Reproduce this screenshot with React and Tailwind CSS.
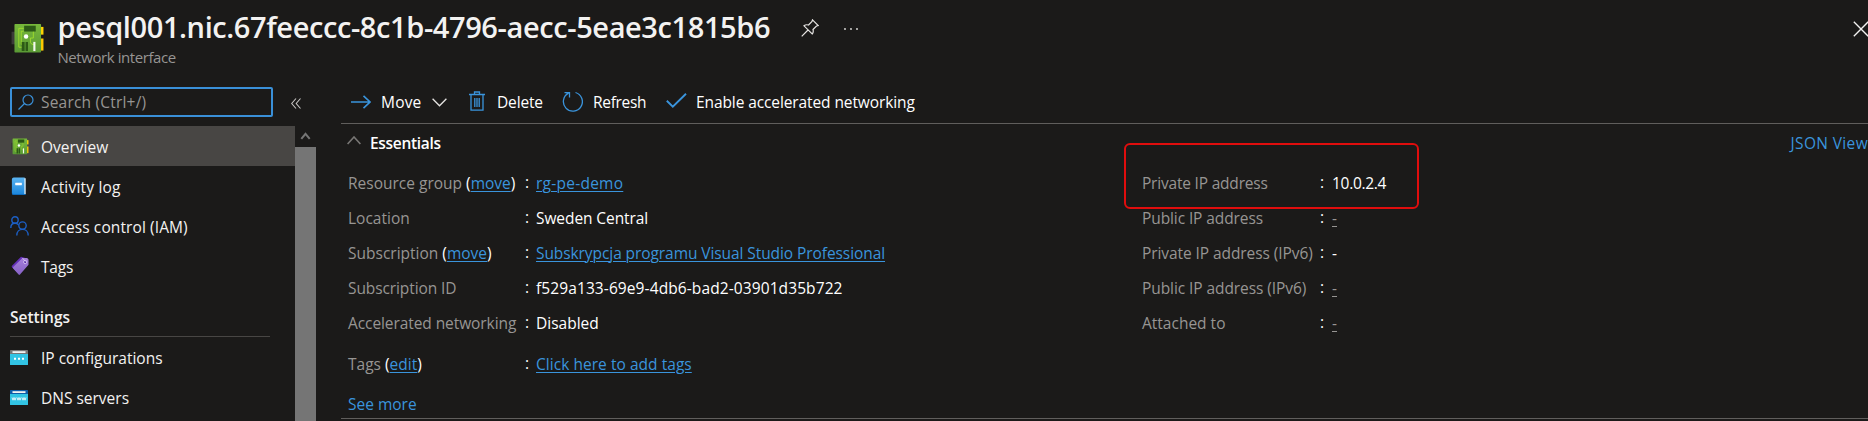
const Nic = ({ className }) => (
  <svg viewBox="0 0 34 30" className={className}>
    <rect x="0" y="8" width="5" height="13" fill="#3b3a39" />
    <rect x="28" y="3" width="5" height="8" fill="#ffd400" />
    <rect x="28" y="15" width="5" height="12.500" fill="#ffca00" />
    <defs>
      <linearGradient id="board" x1="0" y1="0" x2="0" y2="1">
        <stop offset="0" stopColor="#77b83a" />
        <stop offset="1" stopColor="#5a9a35" />
      </linearGradient>
    </defs>
    <rect x="3" y="0" width="27.500" height="29.500" rx="0.800" fill="url(#board)" />
    <rect x="13" y="1.800" width="12" height="6" fill="#2c5a16" />
    <path d="M12.500 4.500H7.500V24h4M12.500 7.500H10V21h2M22.500 8v6.500h-3v4.500l1.500 2h3" fill="none" stroke="#a4e02c" strokeWidth="0.900" />
    <circle cx="15" cy="13" r="2.300" fill="#fff" />
    <path d="M10.500 18.500h3v9.500h-3zM14.500 18.500h2.500v9.500h-2.500z" fill="#2c5a16" />
    <rect x="22.500" y="18.500" width="2.200" height="9.500" fill="#f4f9ee" />
  </svg>
);

const Log = () => (
  <svg viewBox="0 0 18 20" className="h-[19px] w-[18px]">
    <defs>
      <linearGradient id="log" x1="0" y1="0" x2="0" y2="1">
        <stop offset="0" stopColor="#5ab4f2" />
        <stop offset="1" stopColor="#1b86dc" />
      </linearGradient>
    </defs>
    <path d="M3 1.500h12.500V18H3z" fill="#e8f4fc" />
    <path d="M3.500.5h11.500V18.500H3A1.500 1.500 0 0 1 1.500 17V2.500A2 2 0 0 1 3.500.5z" fill="url(#log)" />
    <path d="M1.500 17q0 2 2 2h12.500v-1.200H3z" fill="#0f6cbd" />
    <path d="M14.800 1.200H16V18h-1.200z" fill="#d8ecfa" />
    <rect x="5" y="6" width="7" height="2.600" rx="0.400" fill="#fff" />
  </svg>
);

const People = () => (
  <svg viewBox="0 0 20 20" className="-mt-px h-5 w-5" fill="none" stroke="#1c5fc4" strokeWidth="1.400">
    <circle cx="5" cy="4" r="3.200" />
    <path d="M.8 12C.8 8.800 2.600 7.300 5 7.300c1.400 0 2.600.5 3.500 1.400" />
    <circle cx="12.500" cy="9.600" r="3.700" />
    <path d="M6.800 19.500c0-3.800 2.500-6.100 5.700-6.100s5.700 2.300 5.700 6.100" />
  </svg>
);

const Tag = () => (
  <svg viewBox="0 0 20 20" className="-mt-px h-5 w-5">
    <defs>
      <linearGradient id="tag" x1="0" y1="0" x2="0" y2="1">
        <stop offset="0" stopColor="#a67fdb" />
        <stop offset="1" stopColor="#8661c5" />
      </linearGradient>
    </defs>
    <path d="M11 .8 2 9.800a1 1 0 0 0 0 1.400l6 6L17 6V2.500z" fill="#6330b8" />
    <path d="M12.500 2h4.700l1.300 1.500v5.200L10 18.600a1 1 0 0 1-1.400 0L3.200 12.500a1 1 0 0 1 0-1.400z" fill="url(#tag)" />
    <circle cx="15.200" cy="6" r="1.600" fill="#5b2bab" stroke="#e6dbf7" strokeWidth="0.800" />
    <path d="M12.500 2.200 15.600 5.500" stroke="#d9c9f2" strokeWidth="0.800" />
  </svg>
);

const IpConfig = () => (
  <svg viewBox="0 0 18 15" className="h-[15px] w-[18px]">
    <rect width="18" height="5" rx="0.600" fill="#767676" />
    <rect x="2.500" y="1.200" width="13" height="1.800" fill="#f2f2f2" />
    <path d="M0 4h18v10.400q0 .6-.6.6H.6q-.6 0-.6-.6z" fill="#32c4e4" />
    <path d="M4 8.800h2M8 8.800h2M12 8.800h2" stroke="#fff" strokeWidth="2" />
  </svg>
);

const Dns = () => (
  <svg viewBox="0 0 18 15" className="h-[15px] w-[18px]">
    <rect width="18" height="5" rx="0.600" fill="#0e5ca8" />
    <rect x="2.500" y="1.200" width="13" height="1.800" fill="#f2f2f2" />
    <path d="M0 4h18v10.400q0 .6-.6.6H.6q-.6 0-.6-.6z" fill="#32c4e4" />
    <path d="m2 7.500 1 2.700 1-2.700 1 2.700 1-2.700m1 0 1 2.700 1-2.700 1 2.700 1-2.700m1 0 1 2.700 1-2.700 1 2.700 1-2.700" fill="none" stroke="#fff" strokeWidth="0.800" />
  </svg>
);

const NavItem = ({ icon, label, track = '', active }) => (
  <div className={`flex h-10 shrink-0 items-center pl-[10px] ${active ? 'bg-[#484644]' : ''}`}>
    <span className="flex w-5 shrink-0 items-center">{icon}</span>
    <span className={`mt-px ml-[11px] ${track}`}>{label}</span>
  </div>
);

const Link = ({ children }) => (
  <a className="text-[#3a94dc] underline decoration-1 underline-offset-2">{children}</a>
);

const Row = ({ label, action, track = '', value, vtrack = '', link, muted, cols }) => (
  <div className={`grid h-[35px] items-center ${cols}`}>
    <span className={`text-[#979593] ${track}`}>
      {label}
      {action && <span className="text-white"> (<Link>{action}</Link>)</span>}
    </span>
    <span className="-mt-px text-white">:</span>
    <span className={`text-white ${vtrack}`}>
      {link ? <Link>{value}</Link> : muted ? <span className="text-[#979593] underline decoration-1 underline-offset-2">{value}</span> : value}
    </span>
  </div>
);

const LEFT = 'grid-cols-[177px_11px_auto]';
const RIGHT = 'grid-cols-[178px_12px_auto]';

export default function App() {
  return (
    <div className="relative flex h-[421px] w-[1868px] flex-col overflow-hidden bg-[#1b1a19] font-['Open_Sans','Noto_Sans',sans-serif] text-[15.5px] leading-5 whitespace-nowrap text-[#f3f2f1]">
      <header className="flex h-[79px] shrink-0">
        <Nic className="mt-[24px] ml-[11px] h-[29px] w-[34px]" />
        <div className="ml-[12.5px] w-[731.5px] pt-[9px]">
          <h1 className="text-[29px] leading-9 font-semibold tracking-[-0.4px]">pesql001.nic.67feeccc-8c1b-4796-aecc-5eae3c1815b6</h1>
          <p className="mt-[2px] text-[15px] tracking-[-0.43px] text-[#979593]">Network interface</p>
        </div>
        <svg viewBox="0 0 18 18" className="mt-[19px] ml-3 h-[18px] w-[18px]" fill="none" stroke="#e6e4e2" strokeWidth="1.200">
          <path d="M11.500.8 17.200 6.500 15.500 7 12 10.500q.8 2.800-.8 4.500L3 6.800Q4.800 5.200 7.500 6L11 2.500zM7 11 .7 17.300" />
        </svg>
        <svg viewBox="0 0 14 4" className="mt-[27px] ml-[25px] h-1 w-[14px]" fill="#e6e4e2">
          <circle cx="1" cy="2" r="0.900" /><circle cx="7" cy="2" r="0.900" /><circle cx="13" cy="2" r="0.900" />
        </svg>
        <svg viewBox="0 0 16 16" className="mt-[21px] -mr-px ml-auto h-4 w-4" stroke="#f3f2f1" strokeWidth="1.300">
          <path d="m.8.8 14.400 14.400M15.200.8.8 15.200" />
        </svg>
      </header>

      <div className="flex min-h-0 flex-1">
        <aside className="flex w-[316px] shrink-0 flex-col">
          <div className="flex h-[47px] shrink-0 items-start pt-2 pl-[10px]">
            <div className="flex h-[30px] w-[263px] items-center rounded-[2px] border-2 border-[#3a90d8] pl-[6px]">
              <svg viewBox="0 0 16 16" className="h-4 w-4" fill="none" stroke="#3a90d8" strokeWidth="1.200">
                <circle cx="10" cy="6" r="5" /><path d="M6.500 9.500.5 15.500" />
              </svg>
              <span className="ml-[7px] tracking-[0.2px] text-[#979593]">Search (Ctrl+/)</span>
            </div>
            <svg viewBox="0 0 10 11" className="mt-[11px] ml-[18px] h-[11px] w-[10px]" fill="none" stroke="#c8c6c4" strokeWidth="1.100">
              <path d="M5 .5.700 5.500 5 10.500M9.500.5 5.200 5.500l4.300 5" />
            </svg>
          </div>
          <div className="flex min-h-0 flex-1">
            <nav className="flex w-[295px] flex-col">
              <NavItem active icon={<Nic className="ml-px h-[17px] w-[18px]" />} label="Overview" />
              <NavItem icon={<Log />} label="Activity log" track="tracking-[0.2px]" />
              <NavItem icon={<People />} label="Access control (IAM)" track="tracking-[0.1px]" />
              <NavItem icon={<Tag />} label="Tags" track="tracking-[-0.2px]" />
              <h2 className="mt-[21px] ml-[10px] h-[30px] w-[260px] shrink-0 border-b border-[#484644] font-semibold">Settings</h2>
              <NavItem icon={<IpConfig />} label="IP configurations" />
              <NavItem icon={<Dns />} label="DNS servers" />
            </nav>
            <div className="flex w-[21px] flex-col bg-[#757575]">
              <div className="flex h-[21px] items-center justify-center bg-[#1b1a19]">
                <svg viewBox="0 0 10 8" className="-mt-px h-2 w-[11px]" fill="none" stroke="#757575" strokeWidth="2"><path d="m.8 6.800L5 1.800l4.200 5" /></svg>
              </div>
            </div>
          </div>
        </aside>

        <main className="ml-[25px] flex min-w-0 flex-1 flex-col">
          <div className="flex h-[45px] shrink-0 items-center border-b border-[#605e5c] pt-[2px] pl-[10px] text-white">
            <svg viewBox="0 0 20 14" className="-mt-px h-[14px] w-5" fill="none" stroke="#3a94dc" strokeWidth="1.600"><path d="M0 7h19M12.500.8 19 7l-6.500 6.200" /></svg>
            <span className="ml-[10px] w-[51px] tracking-[0.2px]">Move</span>
            <svg viewBox="0 0 15 9" className="mt-px h-[9px] w-[15px]" fill="none" stroke="#e6e4e2" strokeWidth="1.300"><path d="m.6.8 6.900 7L14.400.8" /></svg>
            <svg viewBox="0 0 16 20" className="-mt-[2px] ml-[22px] h-5 w-4" fill="none" stroke="#3a94dc" strokeWidth="1.300">
              <path d="M0 3.500h16M5.500 3.300V1h5v2.300M2 3.500v15.700h12V3.500M5.800 7v9M8 7v9M10.200 7v9" />
            </svg>
            <span className="ml-3 w-[65px] tracking-[-0.15px]">Delete</span>
            <svg viewBox="0 0 21 21" className="-mt-[2px] h-[21px] w-[21px]" fill="none" stroke="#3a94dc" strokeWidth="1.300">
              <path d="M13.500 1.500A9.500 9.500 0 1 1 6.500 2.200M2.500 1.600h5v5" />
            </svg>
            <span className="ml-[10px] w-[73px] tracking-[-0.3px]">Refresh</span>
            <svg viewBox="0 0 21 15" className="-mt-[3px] h-[15px] w-[21px]" fill="none" stroke="#3a94dc" strokeWidth="1.900"><path d="m.8 7.800 6 5.800L20 .8" /></svg>
            <span className="ml-[9px] tracking-[-0.1px]">Enable accelerated networking</span>
          </div>

          <div className="flex h-[41px] shrink-0 items-center justify-between pb-[4px] pl-[6px]">
            <div className="flex items-center">
              <svg viewBox="0 0 14 9" className="-mt-1 h-[9px] w-[14px]" fill="none" stroke="#797775" strokeWidth="1.600"><path d="M.6 8 7 1l6.400 7" /></svg>
              <span className="ml-[9px] font-semibold tracking-[-0.3px] text-white">Essentials</span>
            </div>
            <a className="tracking-[0.35px] text-[#3a94dc]">JSON View</a>
          </div>

          <div className="flex h-[254px] shrink-0 flex-col border-b border-[#605e5c]">
            <div className="flex">
              <div className="w-[795px] pl-[7px]">
                <Row cols={LEFT} label="Resource group" action="move" value="rg-pe-demo" vtrack="tracking-[0.25px]" link />
                <Row cols={LEFT} label="Location" value="Sweden Central" vtrack="tracking-[-0.08px]" />
                <Row cols={LEFT} label="Subscription" action="move" value="Subskrypcja programu Visual Studio Professional" vtrack="tracking-[-0.08px]" link />
                <Row cols={LEFT} label="Subscription ID" track="tracking-[-0.1px]" value="f529a133-69e9-4db6-bad2-03901d35b722" vtrack="tracking-[0.1px]" />
                <Row cols={LEFT} label="Accelerated networking" track="tracking-[-0.08px]" value="Disabled" />
                <div className="h-[6px]" />
                <Row cols={LEFT} label="Tags" action="edit" value="Click here to add tags" vtrack="tracking-[0.04px]" link />
                <a className="mt-[13px] block text-[#3a94dc]">See more</a>
              </div>
              <div className="relative flex-1 pl-[6px]">
                <Row cols={RIGHT} label="Private IP address" track="tracking-[-0.2px]" value="10.0.2.4" vtrack="tracking-[-0.3px]" />
                <Row cols={RIGHT} label="Public IP address" track="tracking-[-0.1px]" value="-" muted />
                <Row cols={RIGHT} label="Private IP address (IPv6)" track="tracking-[-0.08px]" value="-" />
                <Row cols={RIGHT} label="Public IP address (IPv6)" track="tracking-[-0.08px]" value="-" muted />
                <Row cols={RIGHT} label="Attached to" value="-" muted />
                <div className="absolute -top-[22px] -left-[12px] h-[66px] w-[295px] rounded-[6px] border-2 border-[#e00d0d]" />
              </div>
            </div>
          </div>
        </main>
      </div>
    </div>
  );
}
